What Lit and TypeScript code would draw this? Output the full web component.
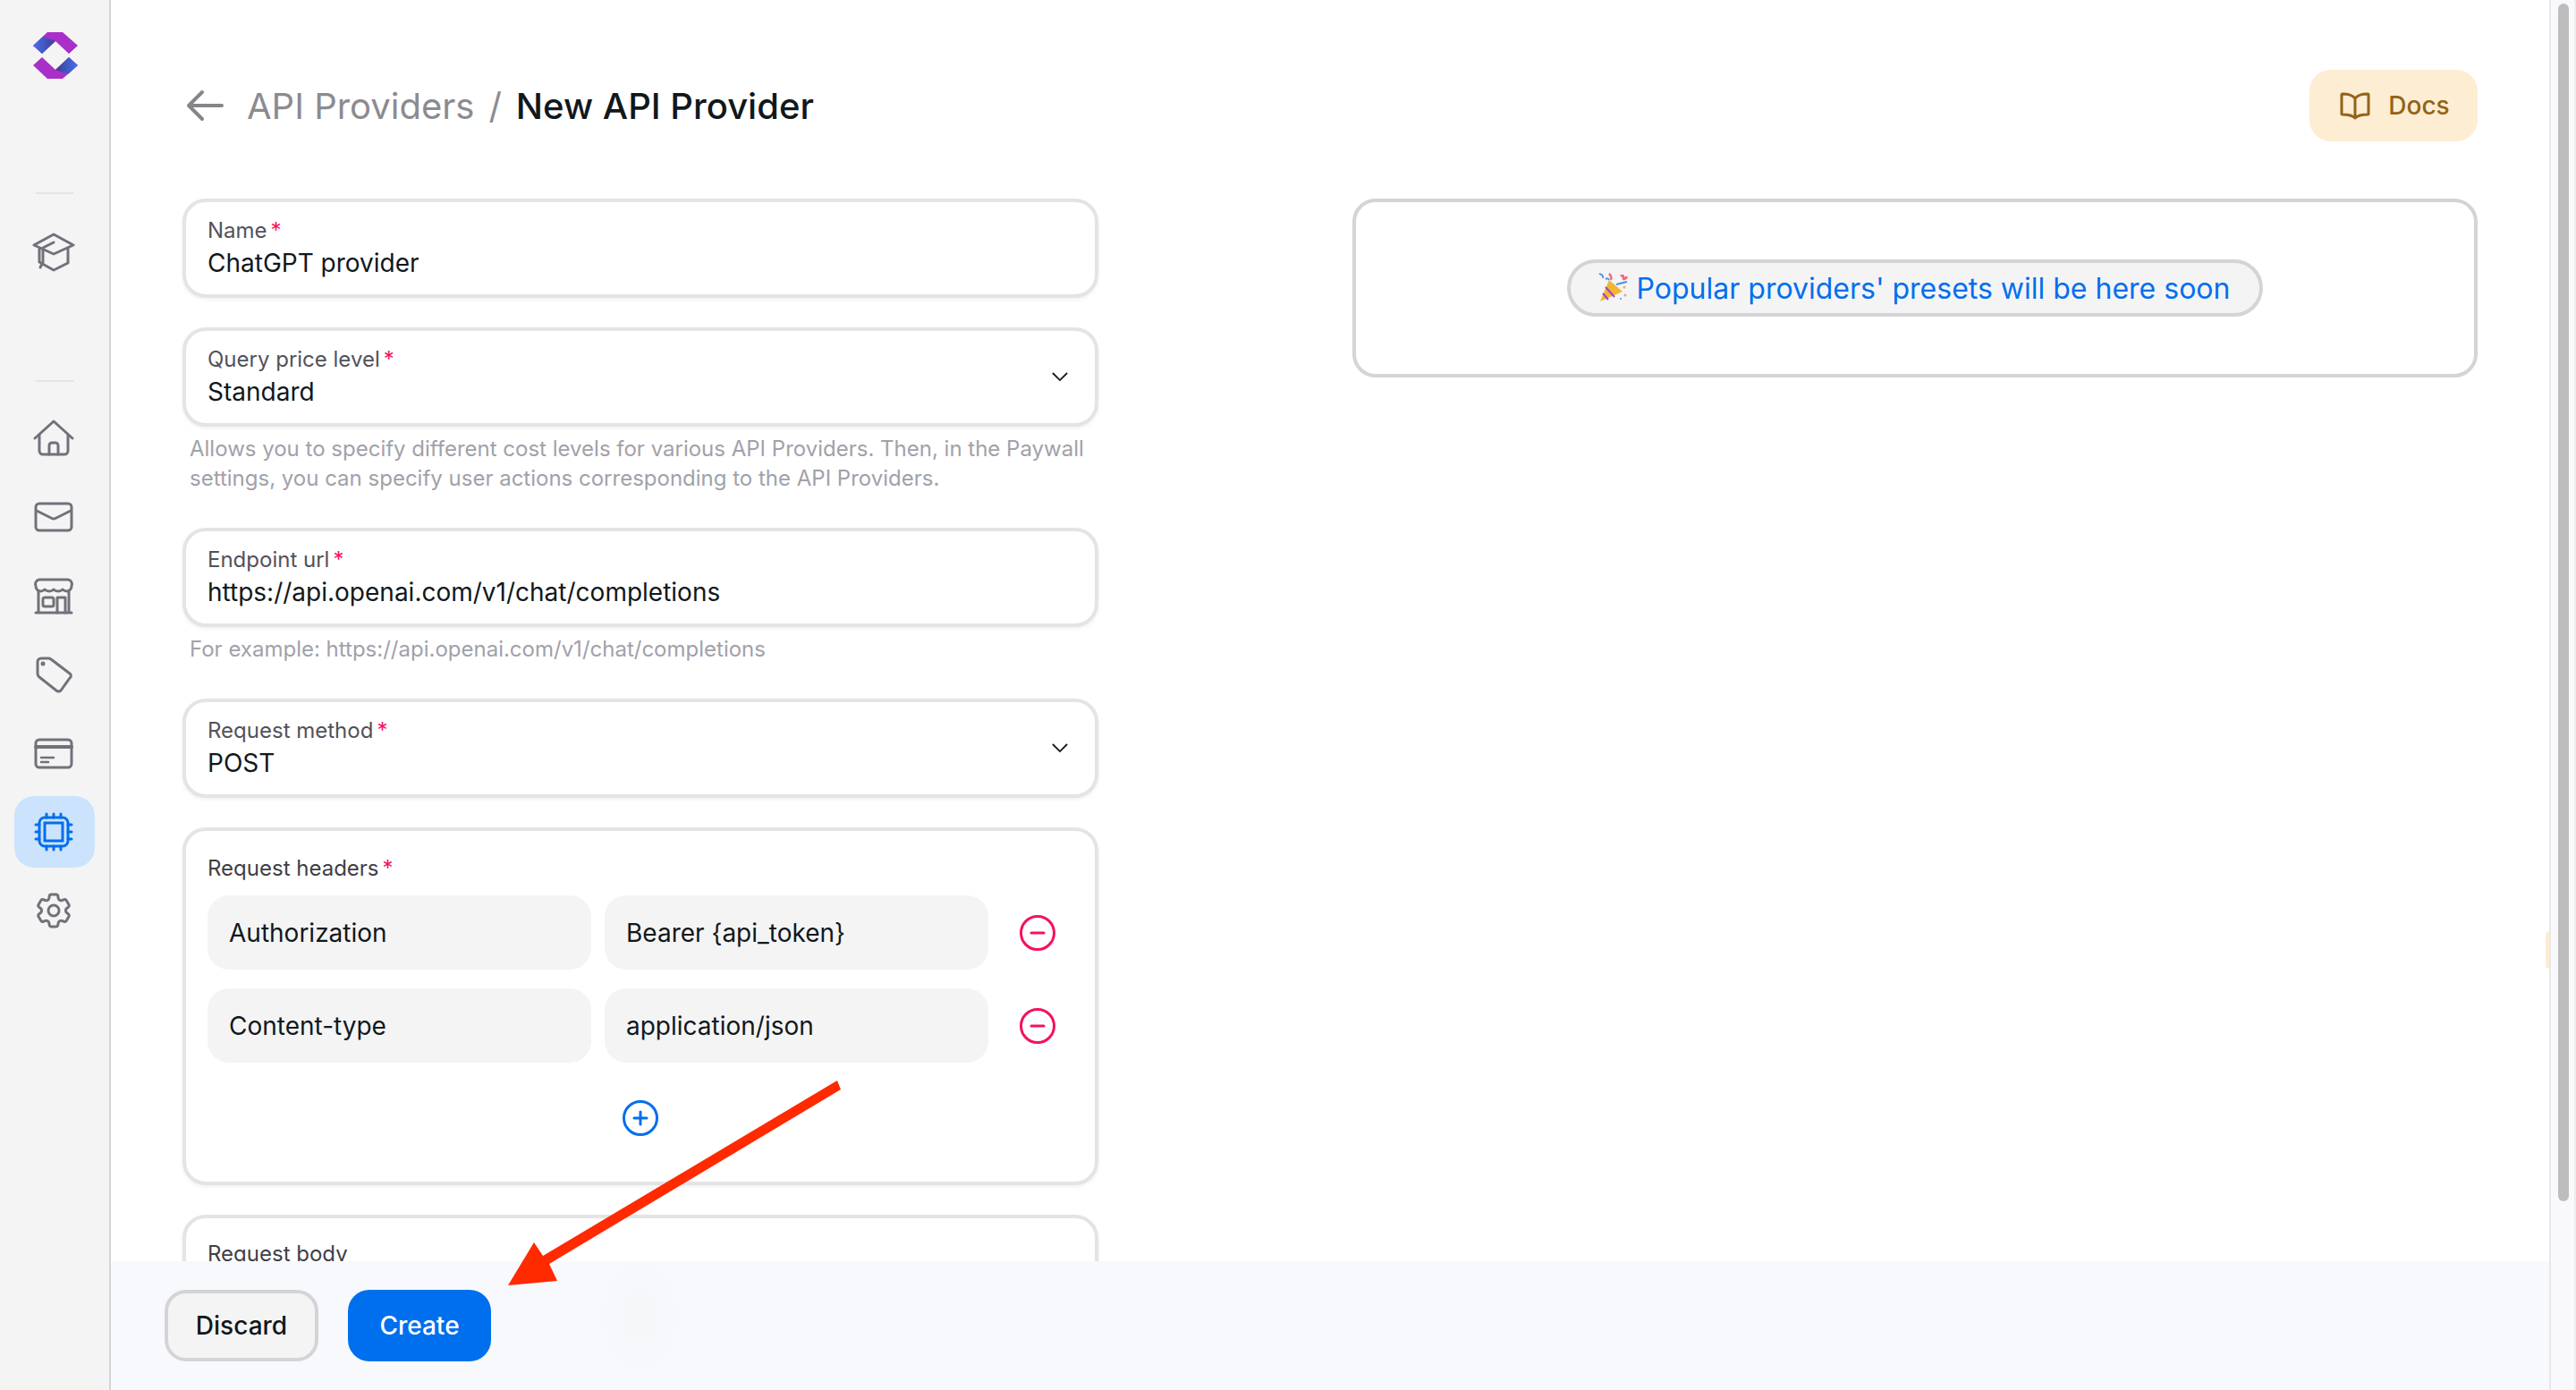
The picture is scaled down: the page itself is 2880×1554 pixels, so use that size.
import { LitElement, html, css, svg } from 'lit';
import { customElement } from 'lit/decorators.js';

const navIcons = [
  svg`<path d="M24 5 2 17l22 10 22-10Z"/><path d="M8 21v15l16 9 16-8V20"/><path d="M24 14 12 20v16l-3 6"/>`,
  svg`<path d="M3 24 24 5l21 19"/><path d="M8 20v18a4 4 0 0 0 4 4h24a4 4 0 0 0 4-4V20"/><path d="M19 42V32a3 3 0 0 1 3-3h4a3 3 0 0 1 3 3v10"/>`,
  svg`<rect x="4" y="9" width="40" height="30" rx="4"/><path d="M5 17l17 8.500q2 1 4 0L43 17"/>`,
  svg`<path d="M8 6h32a5 5 0 0 1 4 7 6 6 0 0 1-5 6q-3 0-5-2-2 2-5 2t-5-2q-2 2-5 2t-5-2q-2 2-5 2a6 6 0 0 1-5-6 5 5 0 0 1 4-7Z"/><path d="M7 19v24M41 19v24M4 43h40"/><rect x="12" y="26" width="12" height="10" rx="2"/><path d="M28 43V26h9v17"/>`,
  svg`<path d="M6 10a4 4 0 0 1 4-4h8a5 5 0 0 1 3 1l21 16a3 3 0 0 1 0 5L32 42a4 4 0 0 1-5 0L8 27a5 5 0 0 1-2-4Z"/><circle cx="12" cy="12" r="1" fill="currentColor"/>`,
  svg`<rect x="4" y="9" width="40" height="31" rx="4"/><path d="M4 17h40" stroke-width="4"/><path d="M10 29h14M10 34h8" stroke-width="2.500"/>`,
  svg`<rect x="8" y="8" width="32" height="32" rx="6"/><rect x="14" y="14" width="20" height="20" stroke-linejoin="miter"/><path d="M16 4v4M24 4v4M32 4v4M16 40v4M24 40v4M32 40v4M4 16h4M4 24h4M4 32h4M40 16h4M40 24h4M40 32h4"/>`,
];

const gearIcon = html`<svg class="gear" viewBox="0 0 24 24" fill="none" stroke="currentColor" stroke-width="1.500"><path d="M9.594 3.940c.09-.542.56-.94 1.110-.94h2.593c.55 0 1.020.398 1.110.94l.213 1.281c.063.374.313.686.645.870.074.04.147.083.22.127.325.196.72.257 1.075.124l1.217-.456a1.125 1.125 0 0 1 1.370.490l1.296 2.247a1.125 1.125 0 0 1-.26 1.431l-1.003.827c-.293.241-.438.613-.43.992a7.723 7.723 0 0 1 0 .255c-.008.378.137.75.43.991l1.004.827c.424.35.534.955.26 1.430l-1.298 2.247a1.125 1.125 0 0 1-1.369.491l-1.217-.456c-.355-.133-.75-.072-1.076.124a6.470 6.470 0 0 1-.22.128c-.331.183-.581.495-.644.869l-.213 1.281c-.09.543-.56.94-1.110.94h-2.594c-.55 0-1.019-.398-1.110-.94l-.213-1.281c-.062-.374-.312-.686-.644-.87a6.520 6.520 0 0 1-.22-.127c-.325-.196-.72-.257-1.076-.124l-1.217.456a1.125 1.125 0 0 1-1.369-.49l-1.297-2.247a1.125 1.125 0 0 1 .26-1.431l1.004-.827c.292-.24.437-.613.43-.991a6.932 6.932 0 0 1 0-.255c.007-.38-.138-.751-.43-.992l-1.004-.827a1.125 1.125 0 0 1-.26-1.430l1.297-2.247a1.125 1.125 0 0 1 1.370-.491l1.216.456c.356.133.751.072 1.076-.124.072-.044.146-.086.22-.128.332-.183.582-.495.644-.869l.214-1.280Z"/><circle cx="12" cy="12" r="3"/></svg>`;

const chevron = html`<svg class="chevron" viewBox="0 0 20 12" fill="none" stroke="currentColor" stroke-width="2"><path d="M1 1l9 9 9-9"/></svg>`;

@customElement('app-root')
export class AppRoot extends LitElement {
  static styles = css`
    :host {
      display: block;
      position: relative;
      width: 2880px;
      height: 1554px;
      overflow: hidden;
      font-family: Inter, 'Liberation Sans', sans-serif;
      color: #11181c;
      background: #fff;
    }
    .page { display: flex; height: 100%; }

    .sidebar {
      box-sizing: border-box;
      flex: none;
      width: 124px;
      padding: 36px 16px 0;
      display: flex;
      flex-direction: column;
      align-items: center;
      background: #f4f4f5;
      border-right: 2px solid #d4d4d8;
      color: #71717a;
    }
    .logo { width: 50px; height: 52px; flex: none; margin-left: 2px; }
    .divider { flex: none; width: 42px; height: 2px; background: #e4e4e7; margin: 127px 0 24px; }
    .divider.second { margin: 96px 0 23px; }
    .nav-item {
      flex: none;
      box-sizing: border-box;
      width: 90px;
      height: 80px;
      margin-bottom: 8px;
      border-radius: 22px;
      display: flex;
      align-items: center;
      justify-content: center;
    }
    .nav-item svg { width: 48px; height: 48px; margin-left: -2px; }
    .nav-item.active { background: #cce3fd; color: #006fee; }

    .main {
      position: relative;
      flex: 1;
      min-width: 0;
      box-sizing: border-box;
      padding: 78px 80px 0;
      overflow: hidden;
    }
    .header { display: flex; align-items: center; justify-content: space-between; height: 80px; margin-bottom: 64px; }
    .crumbs { display: flex; align-items: center; font-size: 40px; color: #8b8b90; white-space: nowrap; }
    .back { width: 44px; height: 36px; margin: 0 24px 0 4px; color: #85858a; }
    .sep { margin: 0 16px; }
    .current { color: #11181c; font-weight: 500; }
    .docs {
      display: flex;
      align-items: center;
      gap: 20px;
      box-sizing: border-box;
      width: 188px;
      height: 80px;
      padding-left: 3px;
      justify-content: center;
      border-radius: 24px;
      background: #fdedd3;
      color: #936316;
      font-size: 28px;
      font-weight: 500;
    }
    .docs svg { width: 34px; height: 31px; }

    .columns { display: grid; grid-template-columns: 1024px 1258px; column-gap: 284px; align-items: start; }
    .form { display: flex; flex-direction: column; }

    .field {
      box-sizing: border-box;
      height: 111px;
      padding: 0 30px 0 24px;
      border: 4px solid #e4e4e7;
      border-radius: 26px;
      box-shadow: 0 2px 4px rgba(0, 0, 0, 0.06);
      display: flex;
      justify-content: space-between;
      align-items: center;
      margin-bottom: 33px;
      background: #fff;
    }
    .field.has-help { margin-bottom: 0; }
    .field-body { display: flex; flex-direction: column; gap: 2px; }
    .label { font-size: 24px; line-height: 31px; color: #52525b; }
    .label i { font-style: normal; color: #f31260; margin-left: 4px; }
    .value { font-size: 28px; line-height: 38px; }
    .chevron { width: 18px; height: 11px; }
    .help { font-size: 24px; line-height: 33px; color: #a1a1aa; padding: 8px 0 0 8px; margin-bottom: 39px; }

    .group {
      box-sizing: border-box;
      height: 400px;
      padding: 26px 24px 0;
      border: 4px solid #e4e4e7;
      border-radius: 26px;
      box-shadow: 0 2px 4px rgba(0, 0, 0, 0.06);
      margin-bottom: 33px;
    }
    .group.body { padding-top: 24px; }
    .group .label { color: #3f3f46; }
    .rows { display: flex; flex-direction: column; gap: 21px; margin-top: 15px; }
    .row { display: grid; grid-template-columns: 429px 429px 40px; column-gap: 15px; align-items: center; }
    .input {
      box-sizing: border-box;
      height: 83px;
      padding-left: 24px;
      display: flex;
      align-items: center;
      border-radius: 24px;
      background: #f4f4f5;
      font-size: 28px;
    }
    .row svg { width: 42px; height: 42px; margin-left: 19px; color: #f31260; }
    .add { display: flex; justify-content: center; margin-top: 41px; color: #006fee; }
    .add svg { width: 42px; height: 42px; }

    .presets {
      box-sizing: border-box;
      height: 200px;
      border: 4px solid #d4d4d8;
      border-radius: 26px;
      display: flex;
      justify-content: center;
      padding-top: 64px;
    }
    .pill {
      box-sizing: border-box;
      height: 64px;
      width: 778px;
      padding-right: 2px;
      display: flex;
      align-items: center;
      justify-content: center;
      gap: 9px;
      border: 4px solid #d4d4d8;
      border-radius: 32px;
      background: #f4f4f5;
      color: #006fee;
      font-size: 32px;
      white-space: nowrap;
    }
    .pill svg { width: 34px; height: 34px; flex: none; margin-top: -2px; }

    .footer {
      position: absolute;
      left: 0;
      right: 0;
      bottom: 0;
      height: 144px;
      box-sizing: border-box;
      padding: 32px 0 0 60px;
      display: flex;
      gap: 33px;
      align-items: flex-start;
      background: radial-gradient(ellipse 50px 70px at 592px 60px, #f5f6f8, transparent), #f8f9fd;
    }
    .btn {
      box-sizing: border-box;
      height: 80px;
      display: flex;
      align-items: center;
      justify-content: center;
      border-radius: 24px;
      font-size: 28px;
      font-weight: 500;
    }
    .btn.discard { width: 172px; background: #f4f4f5; border: 4px solid #d4d4d8; }
    .btn.create { width: 160px; background: #006fee; color: #fff; }

    .tab { position: absolute; right: 0; top: 1041px; width: 4px; height: 42px; border-radius: 4px 0 0 4px; background: #fdedd3; }

    .scrollbar {
      flex: none;
      box-sizing: border-box;
      width: 30px;
      padding: 4px 6px 0 8px;
      background: #f9f9fb;
      border-left: 2px solid #e8e8ec;
      border-right: 2px solid #ececf0;
    }
    .thumb { height: 1339px; border-radius: 8px; background: #bdbdbd; }

    .arrow { position: absolute; left: 560px; top: 1200px; width: 390px; height: 250px; pointer-events: none; }
  `;

  private navItem(body: unknown, active = false) {
    return html`<div class="nav-item ${active ? 'active' : ''}">
      <svg viewBox="0 0 48 48" fill="none" stroke="currentColor" stroke-width="3" stroke-linecap="round" stroke-linejoin="round">${body}</svg>
    </div>`;
  }

  private field(label: string, value: string, select = false, help = '') {
    return html`
      <div class="field ${help ? 'has-help' : ''}">
        <div class="field-body">
          <span class="label">${label}<i>*</i></span>
          <span class="value">${value}</span>
        </div>
        ${select ? chevron : ''}
      </div>
      ${help ? html`<div class="help">${help}</div>` : ''}
    `;
  }

  private headerRow(key: string, value: string) {
    return html`<div class="row">
      <div class="input">${key}</div>
      <div class="input">${value}</div>
      <svg viewBox="0 0 42 42" fill="none" stroke="currentColor" stroke-width="3" stroke-linecap="round"><circle cx="21" cy="21" r="18.500"/><path d="M14 21h14"/></svg>
    </div>`;
  }

  render() {
    return html`
      <div class="page">
        <aside class="sidebar">
          <svg class="logo" viewBox="0 0 50 52">
            <defs>
              <linearGradient id="blue" x1="0" y1="0" x2="1" y2="0"><stop offset="0" stop-color="#4a6ff0"/><stop offset="1" stop-color="#3a3f90"/></linearGradient>
            </defs>
            <path fill="#a92fc8" d="M16 0H33L50 15 40 24 25 10 10 24 0 15Z"/>
            <path fill="#a92fc8" d="M16 52H33L50 37 40 28 25 42 10 28 0 37Z"/>
            <path fill="url(#blue)" d="M0 15 11 5 25 10 10 24Z"/>
            <path fill="url(#blue)" transform="rotate(180 25 26)" d="M0 15 11 5 25 10 10 24Z"/>
          </svg>
          <div class="divider"></div>
          ${this.navItem(navIcons[0])}
          <div class="divider second"></div>
          ${navIcons.slice(1, 6).map((icon) => this.navItem(icon))}
          ${this.navItem(navIcons[6], true)}
          <div class="nav-item">${gearIcon}</div>
        </aside>

        <main class="main">
          <div class="header">
            <div class="crumbs">
              <svg class="back" viewBox="0 0 44 36" fill="none" stroke="currentColor" stroke-width="4" stroke-linecap="round" stroke-linejoin="round"><path d="M40 18H4M18 3 3 18l15 15"/></svg>
              <span>API Providers</span>
              <span class="sep">/</span>
              <span class="current">New API Provider</span>
            </div>
            <div class="docs">
              <svg viewBox="0 0 34 31" fill="none" stroke="currentColor" stroke-width="3" stroke-linejoin="round"><path d="M17 7C14 3 8 2 3 2a1 1 0 0 0-1 1v21a1 1 0 0 0 1 1c6 0 11 1 14 4 3-3 8-4 14-4a1 1 0 0 0 1-1V3a1 1 0 0 0-1-1c-5 0-11 1-14 5Zm0 0v22"/></svg>
              Docs
            </div>
          </div>

          <div class="columns">
            <div class="form">
              ${this.field('Name', 'ChatGPT provider')}
              ${this.field('Query price level', 'Standard', true, 'Allows you to specify different cost levels for various API Providers. Then, in the Paywall settings, you can specify user actions corresponding to the API Providers.')}
              ${this.field('Endpoint url', 'https://api.openai.com/v1/chat/completions', false, 'For example: https://api.openai.com/v1/chat/completions')}
              ${this.field('Request method', 'POST', true)}
              <div class="group">
                <span class="label">Request headers<i>*</i></span>
                <div class="rows">
                  ${this.headerRow('Authorization', 'Bearer {api_token}')}
                  ${this.headerRow('Content-type', 'application/json')}
                </div>
                <div class="add">
                  <svg viewBox="0 0 42 42" fill="none" stroke="currentColor" stroke-width="3" stroke-linecap="round"><circle cx="21" cy="21" r="18.500"/><path d="M14 21h14M21 14v14"/></svg>
                </div>
              </div>
              <div class="group body">
                <span class="label">Request body</span>
              </div>
            </div>
            <div class="presets">
              <div class="pill">
                <svg viewBox="0 0 34 34">
                  <path fill="#f2b632" d="M12 9 27 22 2 33Z"/>
                  <path fill="none" stroke="#a03fd0" stroke-width="2" d="M8 17l10 11M5 24l6 7"/>
                  <path fill="none" stroke="#4a8ff0" stroke-width="2" d="M20 14l12-3M1 2c3 1 5 2 4 5M8 8c2-1 3-1 4 1"/>
                  <path fill="none" stroke="#ee6a7c" stroke-width="2.500" d="M12 2c2 2 3 4 2 7M25 5c2-2 4 0 3 2s3 1 4-2"/>
                  <circle cx="29" cy="17" r="1.500" fill="#f2b632"/><circle cx="30" cy="26" r="1.500" fill="#ee9aa8"/><circle cx="25" cy="30" r="1" fill="#4a8ff0"/>
                </svg>
                Popular providers' presets will be here soon
              </div>
            </div>
          </div>

          <div class="tab"></div>

          <div class="footer">
            <div class="btn discard">Discard</div>
            <div class="btn create">Create</div>
          </div>
        </main>

        <div class="scrollbar"><div class="thumb"></div></div>
      </div>

      <svg class="arrow" viewBox="0 0 390 250">
        <path fill="#ff2a00" d="M376 8 380 18 54 213 63 232 8 237 37 189 47 204Z"/>
      </svg>
    `;
  }
}
